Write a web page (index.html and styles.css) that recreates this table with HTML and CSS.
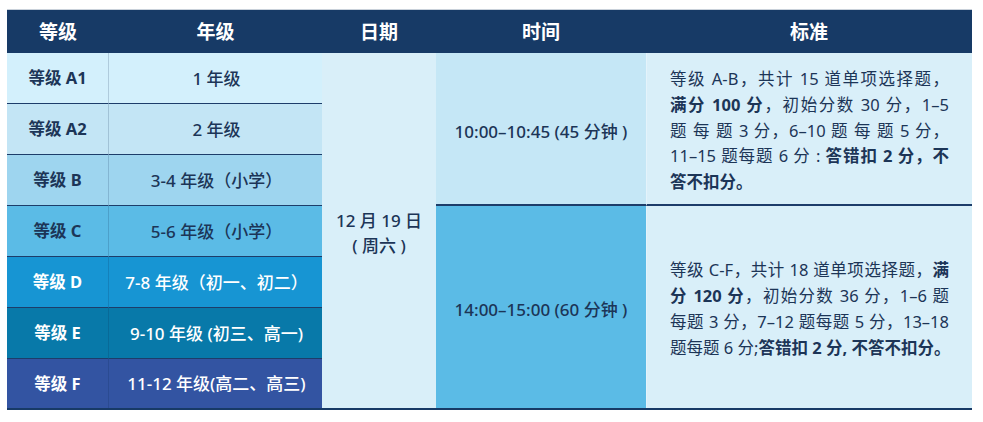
FILE: index.html
```html
<!DOCTYPE html>
<html lang="zh">
<head>
<meta charset="utf-8">
<title>等级安排</title>
<link rel="stylesheet" href="styles.css">
</head>
<body>
<div class="sheet">
  <div class="grid">
    <div class="h">等级</div>
    <div class="h">年级</div>
    <div class="h">日期</div>
    <div class="h">时间</div>
    <div class="h">标准</div>

    <div class="date"><span>12 月 19 日</span><span>( 周六 )</span></div>
    <div class="time t1">10:00–10:45 (45 分钟 )</div>
    <div class="std s1">
      <span class="ln">等级 A-B，共计 15 道单项选择题，</span>
      <span class="ln"><b>满分 100 分</b>，初始分数 30 分，1–5</span>
      <span class="ln">题 每 题 3 分，6–10 题 每 题 5 分，</span>
      <span class="ln">11–15 题每题 6 分 : <b>答错扣 2 分，不</b></span>
      <span class="ln last"><b>答不扣分。</b></span>
    </div>
    <div class="time t2">14:00–15:00 (60 分钟 )</div>
    <div class="std s2">
      <span class="ln">等级 C-F，共计 18 道单项选择题，<b>满</b></span>
      <span class="ln"><b>分 120 分</b>，初始分数 36 分，1–6 题</span>
      <span class="ln">每题 3 分，7–12 题每题 5 分，13–18</span>
      <span class="ln">题每题 6 分;<b>答错扣 2 分, 不答不扣分。</b></span>
    </div>

    <div class="lv r1">等级 A1</div><div class="yr r1">1 年级</div>
    <div class="lv r2">等级 A2</div><div class="yr r2">2 年级</div>
    <div class="lv r3">等级 B</div><div class="yr r3">3-4 年级（小学）</div>
    <div class="lv r4">等级 C</div><div class="yr r4">5-6 年级（小学）</div>
    <div class="lv r5">等级 D</div><div class="yr r5">7-8 年级（初一、初二）</div>
    <div class="lv r6">等级 E</div><div class="yr r6">9-10 年级 (初三、高一)</div>
    <div class="lv r7">等级 F</div><div class="yr r7">11-12 年级(高二、高三)</div>
  </div>
</div>
</body>
</html>
```

FILE: styles.css
```css
html, body {
  margin: 0;
  padding: 0;
  background: #ffffff;
}

body {
  font-family: "Noto Sans", "Noto Sans CJK SC", sans-serif;
  color: #1c3557;
}

.sheet {
  padding: 9px 0 0 7px;
}

.grid {
  display: grid;
  width: 965px;
  grid-template-columns: 102px 213px 114px 210px 326px;
  grid-template-rows: 43px repeat(6, 51px) 49px;
  border-top: 1px solid #c9d1da;
  border-bottom: 2px solid #173a66;
}

.h {
  background: #173a66;
  color: #ffffff;
  font-weight: 700;
  font-size: 19px;
  display: flex;
  align-items: center;
  justify-content: center;
  padding-bottom: 1px;
}

.lv, .yr {
  display: flex;
  align-items: center;
  justify-content: center;
  font-size: 16.5px;
  border-bottom: 1px solid #1d3d6a;
  padding-bottom: 2px;
}

.lv {
  grid-column: 1;
  font-weight: 700;
  border-right: 1px solid rgba(10, 40, 80, 0.18);
}

.yr {
  grid-column: 2;
  font-weight: 500;
  font-size: 17px;
  padding-left: 2px;
}

.r1 { background: #d3f0fc; }
.r2 { background: #c3e5f5; }
.r3 { background: #9ed5ef; }
.r4 { background: #5bbbe6; }
.r5 { background: #1795d3; color: #ffffff; }
.r6 { background: #0879a9; color: #ffffff; }
.r7 { background: #3354a2; color: #ffffff; border-bottom: none; }

.date {
  grid-column: 3;
  grid-row: 2 / span 7;
  background: #d9eff9;
  display: flex;
  flex-direction: column;
  align-items: center;
  justify-content: center;
  font-size: 17px;
  font-weight: 500;
  line-height: 25px;
  padding-top: 4px;
}

.time {
  grid-column: 4;
  display: flex;
  align-items: center;
  justify-content: center;
  font-size: 17px;
  font-weight: 500;
}

.t1 {
  grid-row: 2 / span 3;
  background: #c5e7f6;
  border-bottom: 2px solid #1d3d6a;
  padding-top: 3px;
}

.t2 {
  grid-row: 5 / span 4;
  background: #5bbbe6;
  padding-top: 2px;
}

.std {
  grid-column: 5;
  background: #d9eff9;
  border-left: 1px solid #e4f3fb;
  padding: 0 23px 0 23px;
  display: flex;
  flex-direction: column;
  justify-content: center;
  font-size: 16.5px;
  line-height: 25.8px;
}

.s1 {
  grid-row: 2 / span 3;
  border-bottom: 2px solid #1d3d6a;
  padding-top: 4px;
}

.s2 {
  grid-row: 5 / span 4;
  padding-top: 4px;
}

.ln {
  display: block;
  text-align: justify;
  text-align-last: justify;
  white-space: nowrap;
}

.ln.last {
  text-align-last: left;
}

.ln b {
  font-weight: 700;
}
```
